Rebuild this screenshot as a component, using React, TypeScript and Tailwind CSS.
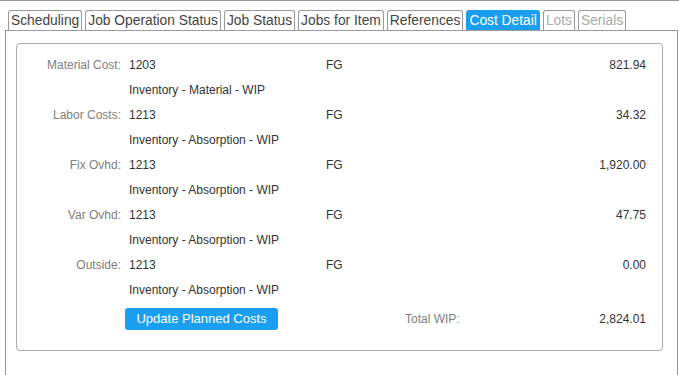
const tabs = [
  { label: "Scheduling" },
  { label: "Job Operation Status" },
  { label: "Job Status" },
  { label: "Jobs for Item" },
  { label: "References" },
  { label: "Cost Detail", active: true },
  { label: "Lots", disabled: true },
  { label: "Serials", disabled: true },
];

const costs = [
  { label: "Material Cost:", account: "1203", desc: "Inventory - Material - WIP", amount: "821.94" },
  { label: "Labor Costs:", account: "1213", desc: "Inventory - Absorption - WIP", amount: "34.32" },
  { label: "Fix Ovhd:", account: "1213", desc: "Inventory - Absorption - WIP", amount: "1,920.00" },
  { label: "Var Ovhd:", account: "1213", desc: "Inventory - Absorption - WIP", amount: "47.75" },
  { label: "Outside:", account: "1213", desc: "Inventory - Absorption - WIP", amount: "0.00" },
];

function Tab({ label, active, disabled }: { label: string; active?: boolean; disabled?: boolean }) {
  const base = "h-[20px] rounded-t-[3px] border border-b-0 px-[2px] text-[13.8px] leading-[19px]";
  if (active) {
    return <div className={`${base} border-[#1a9ff0] bg-[#1a9ff0] text-white`}>{label}</div>;
  }
  return (
    <div className={`${base} border-[#9a9a9a] bg-white ${disabled ? "text-[#aaaaaa]" : "text-[#444]"}`}>
      {label}
    </div>
  );
}

export default function App() {
  return (
    <div className="h-[375px] w-[679px] overflow-hidden bg-white font-['Liberation_Sans',Arial,sans-serif]">
      <div className="border-t border-[#9a9a9a]" />
      <div className="mt-[9px] flex gap-[3px] pl-[8px]">
        {tabs.map((t) => (
          <Tab key={t.label} {...t} />
        ))}
      </div>
      <div className="ml-[5px] h-[400px] w-[673px] border-x border-t border-[#9a9a9a] pt-[12px] pr-[14px] pl-[10px]">
        <div className="h-[308px] rounded-[4px] border border-[#aaaaaa] pt-[8px] pr-[16px] text-[12px] text-[#333]">
          {costs.map((c) => (
            <div key={c.label}>
              <div className="flex h-[25px] items-center">
                <div className="w-[104px] text-right text-[#808080]">{c.label}</div>
                <div className="ml-[8px] w-[197px]">{c.account}</div>
                <div>FG</div>
                <div className="flex-1 text-right">{c.amount}</div>
              </div>
              <div className="flex h-[25px] items-center pl-[112px]">{c.desc}</div>
            </div>
          ))}
          <div className="mt-[6px] flex h-[22px] items-center">
            <button className="ml-[108px] h-[22px] w-[153px] rounded-[3px] bg-[#1a9ff0] text-[13px] text-white">
              Update Planned Costs
            </button>
            <div className="ml-[127px] text-[#808080]">Total WIP:</div>
            <div className="flex-1 text-right">2,824.01</div>
          </div>
        </div>
      </div>
    </div>
  );
}
